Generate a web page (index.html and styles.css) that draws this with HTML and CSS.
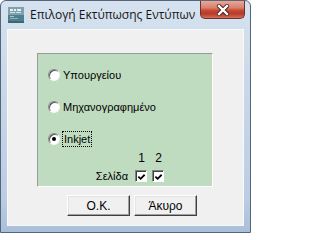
FILE: index.html
```html
<!DOCTYPE html>
<html>
<head>
<meta charset="utf-8">
<link rel="stylesheet" href="styles.css">
</head>
<body>
<div class="window">
  <div class="titlebar">
    <svg class="app-icon" width="16" height="16" viewBox="0 0 16 16">
      <rect x="0" y="0" width="16" height="16" fill="#4f7f8c"/>
      <rect x="0" y="0" width="16" height="8" fill="#7fa3ad"/>
      <rect x="2" y="2" width="3" height="2" fill="#e8f0f2"/>
      <rect x="6" y="2" width="2" height="2" fill="#e8f0f2"/>
      <rect x="9" y="2" width="4" height="2" fill="#e8f0f2"/>
      <rect x="2" y="5" width="5" height="1" fill="#d5e2e6"/>
      <rect x="8" y="5" width="5" height="1" fill="#d5e2e6"/>
      <rect x="2" y="9" width="4" height="1" fill="#a9c3ca"/>
      <rect x="2" y="11" width="8" height="1" fill="#8fb0b8"/>
      <rect x="0" y="14" width="16" height="2" fill="#3c6672"/>
    </svg>
    <span class="title">Επιλογή Εκτύπωσης Εντύπων</span>
    <div class="close">
      <svg width="14" height="12" viewBox="0 0 14 12">
        <path d="M3 2 L11 10 M11 2 L3 10" stroke="#4a1a14" stroke-width="4.2" stroke-linecap="round"/>
        <path d="M3 2 L11 10 M11 2 L3 10" stroke="#ffffff" stroke-width="2.4" stroke-linecap="square"/>
      </svg>
    </div>
  </div>
  <div class="client">
    <div class="panel">
      <div class="opt"><span class="radio"></span><span class="label">Υπουργείου</span></div>
      <div class="opt"><span class="radio"></span><span class="label">Μηχανογραφημένο</span></div>
      <div class="opt"><span class="radio checked"></span><span class="label focus">Inkjet</span></div>
      <div class="pages">
        <span></span>
        <span class="num">1</span>
        <span class="num">2</span>
        <span class="pg-label">Σελίδα</span>
        <span class="check"><svg width="10" height="10" viewBox="0 0 10 10"><path d="M1.5 4.5 L4 7 L8.5 2.5" fill="none" stroke="#000" stroke-width="2"/></svg></span>
        <span class="check"><svg width="10" height="10" viewBox="0 0 10 10"><path d="M1.5 4.5 L4 7 L8.5 2.5" fill="none" stroke="#000" stroke-width="2"/></svg></span>
      </div>
    </div>
    <div class="buttons">
      <div class="btn">O.K.</div>
      <div class="btn">Άκυρο</div>
    </div>
  </div>
</div>
</body>
</html>
```
FILE: styles.css
```css
html, body {
  margin: 0;
  padding: 0;
  background: #ffffff;
}
.window {
  width: 251px;
  height: 233px;
  box-sizing: border-box;
  border: 1px solid #56667a;
  border-radius: 6px 6px 0 0;
  background: linear-gradient(to bottom, #d6e2ef 0%, #c8d7e9 40%, #bccde3 85%, #a9bfd9 100%);
  padding: 0 7px 7px 7px;
  font-family: "Liberation Sans", Arial, sans-serif;
}
.titlebar {
  height: 29px;
  display: flex;
  align-items: flex-start;
}
.app-icon {
  margin-top: 6px;
  flex: none;
}
.title {
  margin-top: 6px;
  margin-left: 6px;
  line-height: 16px;
  font-family: "Open Sans", "DejaVu Sans", sans-serif;
  font-size: 12px;
  color: #151515;
  white-space: nowrap;
}
.close {
  margin-left: auto;
  margin-right: -2px;
  width: 45px;
  height: 18px;
  box-sizing: border-box;
  border: 1px solid #6b3329;
  border-top: none;
  border-radius: 0 0 5px 5px;
  background: linear-gradient(to bottom, #e9a898 0%, #d8806c 40%, #c44a36 55%, #b83a28 75%, #d2705a 100%);
  display: flex;
  align-items: center;
  justify-content: center;
  flex: none;
}
.client {
  height: 195px;
  background: #f0f0f0;
  box-shadow: 0 0 0 1px #f7f9fb;
  padding-top: 23px;
  box-sizing: border-box;
}
.panel {
  margin-left: 29px;
  width: 176px;
  height: 134px;
  box-sizing: border-box;
  background: #c0dcc0;
  border-style: solid;
  border-width: 1px;
  border-color: #9a9a9a #ffffff #ffffff #9a9a9a;
  padding-top: 13px;
  padding-left: 10px;
  font-size: 11px;
  color: #000;
}
.opt {
  height: 16px;
  display: flex;
  align-items: center;
  margin-bottom: 16px;
}
.opt:nth-child(3) {
  margin-bottom: 5px;
}
.radio {
  width: 12px;
  height: 12px;
  box-sizing: border-box;
  border-radius: 50%;
  background: #ffffff;
  border: 1px solid;
  border-color: #8a8a8a #f4f4f4 #f4f4f4 #8a8a8a;
  box-shadow: inset 1px 1px 0 #5a5a5a;
  position: relative;
  flex: none;
}
.radio.checked::after {
  content: "";
  position: absolute;
  left: 3px;
  top: 3px;
  width: 4px;
  height: 4px;
  border-radius: 50%;
  background: #000;
}
.label {
  margin-left: 3px;
  line-height: 14px;
  white-space: nowrap;
}
.label.focus {
  border: 1px dotted #000;
  padding: 0 1px;
  margin-left: 2px;
}
.pages {
  display: grid;
  grid-template-columns: 82px 12px 12px;
  column-gap: 5px;
  row-gap: 5px;
  align-items: center;
  margin-left: 0;
}
.num {
  text-align: center;
  font-size: 12px;
  line-height: 13px;
  padding-left: 1px;
}
.pg-label {
  text-align: right;
  padding-right: 2px;
  font-size: 11px;
  line-height: 12px;
}
.check {
  width: 12px;
  height: 12px;
  box-sizing: border-box;
  background: #fff;
  border: 1px solid;
  border-color: #808080 #ffffff #ffffff #808080;
  box-shadow: inset 1px 1px 0 #404040;
  display: flex;
  align-items: center;
  justify-content: center;
}
.check svg {
  margin: 1px 0 0 1px;
}
.buttons {
  display: flex;
  gap: 4px;
  margin-top: 8px;
  padding-left: 59px;
}
.btn {
  width: 63px;
  height: 21px;
  box-sizing: border-box;
  background: #f0f0f0;
  border: 1px solid;
  border-color: #ffffff #404040 #404040 #ffffff;
  box-shadow: inset -1px -1px 0 #a0a0a0, inset 1px 1px 0 #e3e3e3;
  display: flex;
  align-items: center;
  justify-content: center;
  font-size: 12px;
  color: #000;
}
```
